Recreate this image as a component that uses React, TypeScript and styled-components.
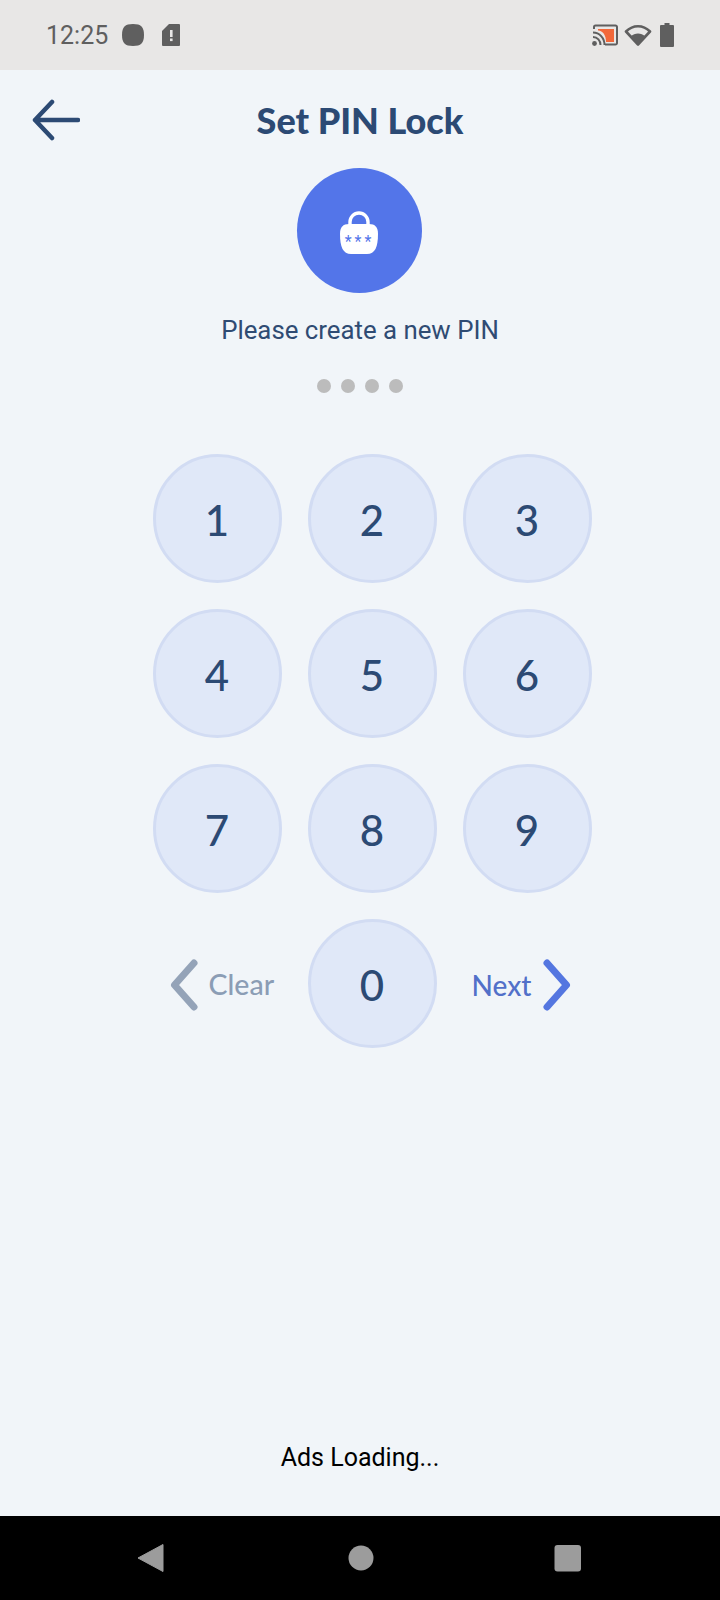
import React from "react";
import styled, { createGlobalStyle } from "styled-components";

const Global = createGlobalStyle`
  html, body { margin: 0; padding: 0; background: #f1f5f9; }
  * { box-sizing: border-box; }
`;

const Screen = styled.div`
  width: 720px;
  height: 1600px;
  display: flex;
  flex-direction: column;
  background: #f1f5f9;
  overflow: hidden;
`;

const StatusBar = styled.div`
  height: 70px;
  flex: none;
  background: #e8e7e6;
  display: flex;
  align-items: center;
  justify-content: space-between;
  padding: 0 46px 0 46px;
`;

const StatusGroup = styled.div`
  display: flex;
  align-items: center;
`;

const Clock = styled.span`
  font: 400 25px/1 Roboto, sans-serif;
  color: #5f5f5f;
  width: 75px;
`;

const Content = styled.div`
  flex: 1;
  display: flex;
  flex-direction: column;
  align-items: center;
`;

const Header = styled.div`
  align-self: stretch;
  height: 96px;
  flex: none;
  display: grid;
  grid-template-columns: 100px 1fr 100px;
  align-items: center;
  padding-top: 3px;
`;

const BackArrow = styled.svg`
  width: 48px;
  height: 42px;
  margin-left: 32px;
  display: block;
`;

const Title = styled.h1`
  margin: 0;
  text-align: center;
  font: 900 36px/1 Lato, sans-serif;
  color: #2c4a74;
`;

const LockBadge = styled.div`
  width: 125px;
  height: 125px;
  margin: 2px 2px 0 0;
  border-radius: 50%;
  background: #5375e9;
  display: flex;
  align-items: center;
  justify-content: center;
`;

const LockIcon = styled.svg`
  width: 40px;
  height: 44px;
  margin-top: 4px;
`;

const Prompt = styled.p`
  margin: 21px 0 0;
  font: 400 25.8px/32px Roboto, sans-serif;
  color: #2f4b73;
`;

const Dots = styled.div`
  display: flex;
  gap: 10px;
  margin-top: 33px;
`;

const Dot = styled.span`
  width: 14px;
  height: 14px;
  border-radius: 50%;
  background: #bcbcbc;
`;

const Keypad = styled.div`
  display: grid;
  grid-template-columns: repeat(3, 129px);
  grid-auto-rows: 129px;
  gap: 26px;
  margin-top: 61px;
  margin-left: 24px;
`;

const Key = styled.div`
  border-radius: 50%;
  background: #e0e8f8;
  border: 3px solid #d2dcf3;
  display: flex;
  align-items: center;
  justify-content: center;
  padding-top: 2px;
  font: 500 42px/1 Lato, sans-serif;
  color: #2c4a74;
`;

const Action = styled.div<{ $color: string; $end?: boolean }>`
  display: flex;
  align-items: center;
  justify-content: ${(p) => (p.$end ? "flex-end" : "flex-start")};
  gap: 11px;
  color: ${(p) => p.$color};
  font: 500 ${(p) => (p.$end ? "28px" : "28.5px")}/1 Lato, sans-serif;
  padding: ${(p) => (p.$end ? "2px 21px 0 0" : "2px 0 0 17px")};
`;

const Chevron = styled.svg`
  width: 28px;
  height: 52px;
  flex: none;
`;

const Ads = styled.div`
  margin-top: auto;
  margin-bottom: 44px;
  font: 400 25px/28px Roboto, sans-serif;
  color: #000;
`;

const NavBar = styled.div`
  height: 84px;
  flex: none;
  background: #000;
  display: flex;
  align-items: center;
  padding-bottom: 1px;
`;

const NavIcon = styled.svg<{ $left: number }>`
  width: 28px;
  height: 30px;
  margin-left: ${(p) => p.$left}px;
  flex: none;
`;

export default function App() {
  return (
    <Screen>
      <Global />
      <StatusBar>
        <StatusGroup>
          <Clock>12:25</Clock>
          <svg width="24" height="24" viewBox="0 0 24 24">
            <path d="M12 1c8 0 11 3 11 11s-3 11-11 11S1 20 1 12 4 1 12 1z" fill="#5f5f5f" />
          </svg>
          <svg width="20" height="24" viewBox="0 0 20 24" style={{ marginLeft: 16 }}>
            <path d="M8 1h10a1 1 0 0 1 1 1v20a1 1 0 0 1-1 1H2a1 1 0 0 1-1-1V8z" fill="#5f5f5f" />
            <rect x="9" y="7" width="2.6" height="7" fill="#e8e7e6" />
            <rect x="9" y="15.5" width="2.6" height="2.6" fill="#e8e7e6" />
          </svg>
        </StatusGroup>
        <StatusGroup>
          <svg width="26" height="22" viewBox="0 0 26 22">
            <path d="M2 5V3a1.5 1.5 0 0 1 1.5-1.5h20A1.5 1.5 0 0 1 25 3v16a1.5 1.5 0 0 1-1.5 1.5H13" fill="none" stroke="#5f5f5f" strokeWidth="2" />
            <path d="M6 5h16v13H14C14 11 11 7 6 6.5z" fill="#f2683a" />
            <path d="M1 8.500C7.500 8.500 12.500 14 12.500 21M1 13c4.500 0 7.500 3.500 7.500 8" fill="none" stroke="#5f5f5f" strokeWidth="2" />
            <circle cx="2.500" cy="19.500" r="2.400" fill="#5f5f5f" />
          </svg>
          <svg width="28" height="22" viewBox="0 0 28 22" style={{ marginLeft: 6 }}>
            <path d="M14 20.500L2 7.500C9 0.500 19 0.500 26 7.500z" fill="none" stroke="#5f5f5f" strokeWidth="2.600" strokeLinejoin="round" />
            <path d="M14 21L6.500 12.500C11 8.500 17 8.500 21.500 12.500z" fill="#5f5f5f" />
          </svg>
          <svg width="14" height="24" viewBox="0 0 14 24" style={{ marginLeft: 8 }}>
            <path d="M4.500 0h5v2H13a1 1 0 0 1 1 1v20a1 1 0 0 1-1 1H1a1 1 0 0 1-1-1V3a1 1 0 0 1 1-1h3.500z" fill="#5f5f5f" />
          </svg>
        </StatusGroup>
      </StatusBar>
      <Content>
        <Header>
          <BackArrow viewBox="0 0 48 42">
            <path d="M20 3L3 21l17 18M3 21h43" fill="none" stroke="#2c4a74" strokeWidth="4.500" strokeLinecap="round" strokeLinejoin="round" />
          </BackArrow>
          <Title>Set PIN Lock</Title>
          <span />
        </Header>
        <LockBadge>
          <LockIcon viewBox="0 0 40 44">
            <path d="M11 14v-3a9 9 0 0 1 18 0v3" fill="none" stroke="#fff" strokeWidth="3.400" />
            <path d="M10 13h20c6 0 9 3 9 10 0 13-3 20-11 20H12C4 43 1 36 1 23c0-7 3-10 9-10z" fill="#fff" />
            <text x="20.500" y="35.500" textAnchor="middle" fontFamily="Roboto, sans-serif" fontSize="16" letterSpacing="3" fill="#5375e9">***</text>
          </LockIcon>
        </LockBadge>
        <Prompt>Please create a new PIN</Prompt>
        <Dots>
          <Dot />
          <Dot />
          <Dot />
          <Dot />
        </Dots>
        <Keypad>
          {["1", "2", "3", "4", "5", "6", "7", "8", "9"].map((n) => (
            <Key key={n}>{n}</Key>
          ))}
          <Action $color="#8b9db5">
            <Chevron viewBox="0 0 28 52">
              <path d="M24 4L4.500 26 24 48" fill="none" stroke="#94a3b8" strokeWidth="7" strokeLinecap="round" strokeLinejoin="round" />
            </Chevron>
            Clear
          </Action>
          <Key>0</Key>
          <Action $color="#5270c9" $end>
            Next
            <Chevron viewBox="0 0 28 52">
              <path d="M4 4l19.500 22L4 48" fill="none" stroke="#5476e0" strokeWidth="7" strokeLinecap="round" strokeLinejoin="round" />
            </Chevron>
          </Action>
        </Keypad>
        <Ads>Ads Loading...</Ads>
      </Content>
      <NavBar>
        <NavIcon $left={137} viewBox="0 0 28 30">
          <path d="M26 1.500v27L1 15z" fill="#9c9c9c" stroke="#9c9c9c" strokeWidth="1" strokeLinejoin="round" />
        </NavIcon>
        <NavIcon $left={182} viewBox="0 0 28 30">
          <circle cx="14" cy="15" r="12.500" fill="#9c9c9c" />
        </NavIcon>
        <NavIcon $left={179} viewBox="0 0 28 30">
          <rect x="0.500" y="2" width="26.500" height="26.500" rx="3" fill="#9c9c9c" />
        </NavIcon>
      </NavBar>
    </Screen>
  );
}
